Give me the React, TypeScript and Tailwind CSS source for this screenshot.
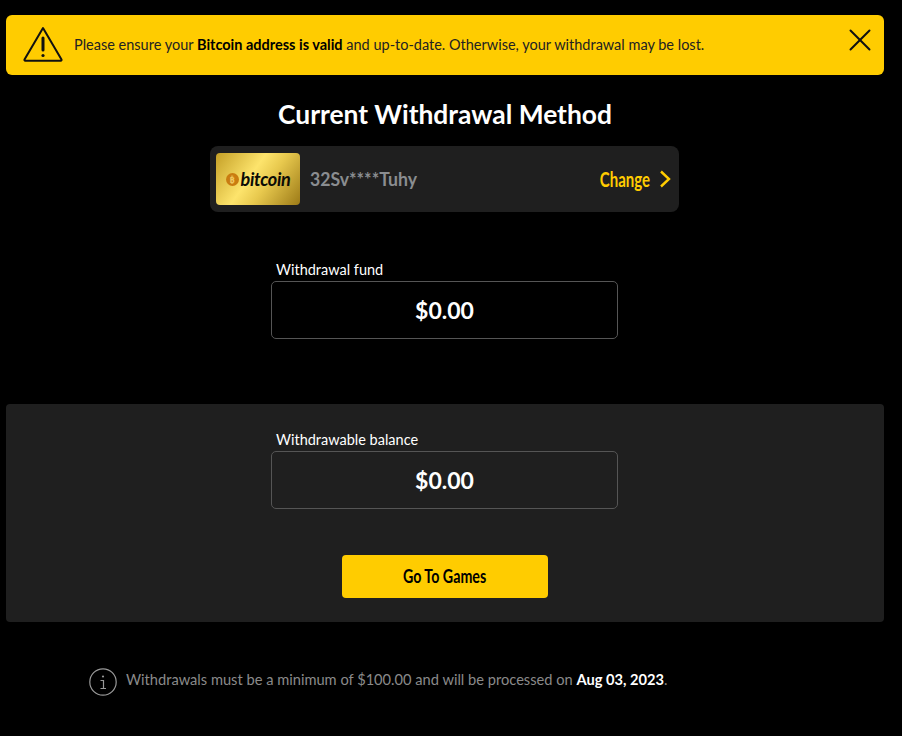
import { X } from "lucide-react";

function AmountField({ label }: { label: string }) {
  return (
    <div className="w-[347px] ml-[265px]">
      <div className="pl-[5px] h-[21px] text-[14.5px] leading-[19px] text-white">{label}</div>
      <div className="h-[58px] flex items-center justify-center rounded-[5px] border border-[#555] text-[23px] font-bold text-white">
        <span className="mt-[1px]">$0.00</span>
      </div>
    </div>
  );
}

function BitcoinLogo() {
  return (
    <div className="w-[84px] h-[52px] flex items-center justify-center gap-[2px] rounded-[4px] bg-[linear-gradient(125deg,#c49f26_0%,#fde46c_42%,#e8c94e_60%,#9c7a17_100%)]">
      <span className="w-[13px] h-[13px] flex items-center justify-center rounded-full bg-[#c97c10] text-[9px] font-bold leading-none text-[#f0c860]">
        ₿
      </span>
      <span className="text-[18px] font-bold italic tracking-[-0.3px] text-[#0b0b05]">bitcoin</span>
    </div>
  );
}

export default function App() {
  return (
    <div className="min-h-[736px] bg-black pt-[15px] pl-[6px] pr-[18px] font-['Lato','Noto_Sans',sans-serif]">
      {/* Alert */}
      <div className="h-[60px] flex items-center rounded-[6px] bg-[#ffcc00] pl-[17px] pr-[5px] text-[#222]">
        <svg className="w-[40px] h-[40px] shrink-0" viewBox="0 0 40 40" fill="none" stroke="#111" strokeWidth="2" strokeLinejoin="round" strokeLinecap="round">
          <path d="M20 3 L38.5 34.5 a0.8 0.8 0 0 1 -0.7 1.2 H2.2 a0.8 0.8 0 0 1 -0.7 -1.2 Z" />
          <path d="M20 13 V25" strokeWidth="3" />
          <circle cx="20" cy="30.5" r="1.6" fill="#111" stroke="none" />
        </svg>
        <p className="ml-[11px] flex-1 text-[14.5px] -mt-[1px]">
          Please ensure your <b className="text-black">Bitcoin address is valid</b> and up-to-date. Otherwise, your withdrawal may be lost.
        </p>
        <X className="w-[38px] h-[38px] -mt-[10px] text-[#111]" strokeWidth={1.25} />
      </div>

      <h1 className="mt-[22px] h-[35px] text-center text-[26.4px] font-bold leading-[34px] text-white">
        Current Withdrawal Method
      </h1>

      {/* Current method */}
      <div className="mt-[14px] w-[469px] h-[66px] ml-[204px] flex items-center rounded-[8px] bg-[#1f1f1f] pl-[6px] pr-[8px]">
        <BitcoinLogo />
        <span className="ml-[10px] flex-1 text-[19px] font-bold text-[#8a8d90] origin-left scale-x-[0.93]">32Sv****Tuhy</span>
        <span className="text-[20px] font-bold text-[#ffcc00] origin-right scale-x-[0.75]">Change</span>
        <svg className="ml-[9px] w-[12px] h-[18px]" viewBox="0 0 12 18" fill="none" stroke="#ffcc00" strokeWidth="2.4">
          <path d="M2 1.5 L10 9 L2 16.5" />
        </svg>
      </div>

      <div className="mt-[48px]">
        <AmountField label="Withdrawal fund" />
      </div>

      {/* Balance panel */}
      <div className="mt-[65px] h-[218px] rounded-[4px] bg-[#1f1f1f] pt-[26px]">
        <AmountField label="Withdrawable balance" />
        <button className="mt-[46px] mx-auto block w-[206px] h-[43px] rounded-[4px] bg-[#ffcc00] text-[19px] font-bold text-black">
          <span className="inline-block -mt-[2px] scale-x-[0.75]">Go To Games</span>
        </button>
      </div>

      {/* Note */}
      <div className="mt-[46px] pl-[83px] flex items-center gap-[9px] text-[14.65px] text-[#8a8a8a]">
        <svg className="w-[28px] h-[28px] shrink-0" viewBox="0 0 28 28" fill="none" stroke="#999" strokeWidth="1.2">
          <circle cx="14" cy="14" r="13.2" />
          <path d="M11.5 12.5 H14.5 V20.5 M11.5 20.5 H17" />
          <circle cx="14" cy="8.5" r="1.1" fill="#999" stroke="none" />
        </svg>
        <p className="-mt-[5px]">
          Withdrawals must be a minimum of $100.00 and will be processed on <b className="text-white">Aug 03, 2023</b>.
        </p>
      </div>
    </div>
  );
}
